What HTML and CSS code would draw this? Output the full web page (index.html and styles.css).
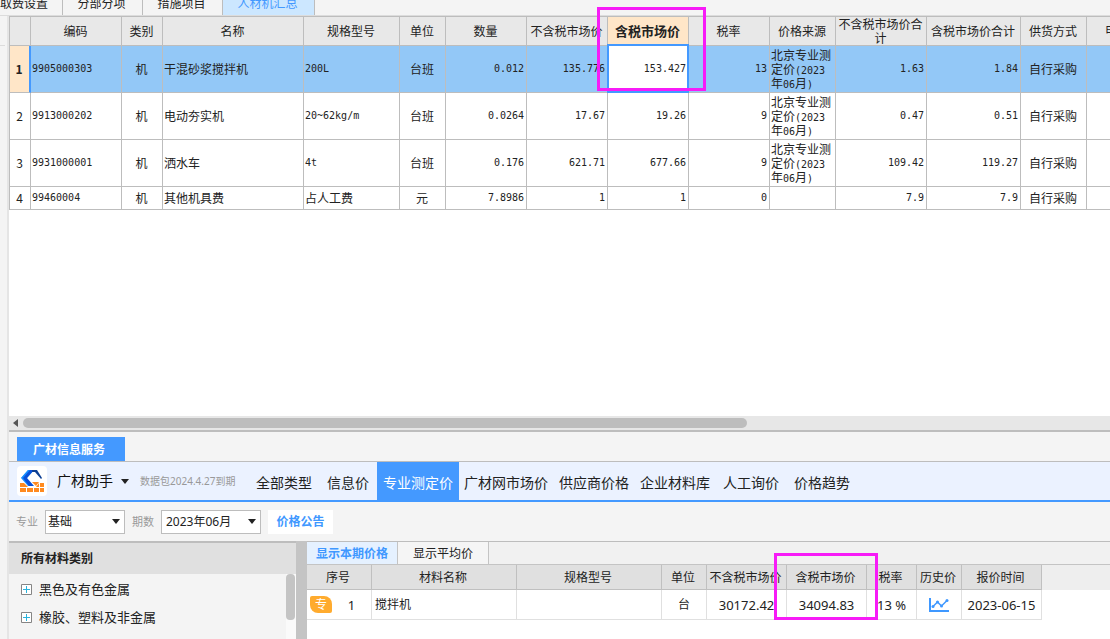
FILE: index.html
```html
<!DOCTYPE html>
<html lang="zh-CN">
<head>
<meta charset="utf-8">
<title>人材机汇总</title>
<link rel="stylesheet" href="styles.css">
</head>
<body>
<nav class="page-tabs">
  <button type="button" class="page-tab page-tab-first">取费设置</button>
  <button type="button" class="page-tab">分部分项</button>
  <button type="button" class="page-tab">措施项目</button>
  <button type="button" class="page-tab page-tab-active">人材机汇总</button>
</nav>
<div class="work">
  <div class="gutter"><div class="gutter-head"></div></div>
  <main class="main">
    <section class="sheet">
      <table class="grid">
        <colgroup>
          <col class="w-index"><col class="w-code"><col class="w-kind"><col class="w-name"><col class="w-spec"><col class="w-unit">
          <col class="w-num"><col class="w-num"><col class="w-num"><col class="w-num"><col class="w-source"><col class="w-code"><col class="w-total"><col class="w-source"><col class="w-last">
        </colgroup>
        <thead>
          <tr><th></th><th>编码</th><th>类别</th><th>名称</th><th>规格型号</th><th>单位</th><th>数量</th><th>不含税市场价</th><th class="current-col">含税市场价</th><th>税率</th><th>价格来源</th><th>不含税市场价合计</th><th>含税市场价合计</th><th>供货方式</th><th>甲供数量</th></tr>
        </thead>
        <tbody>
          <tr class="row-tall row-selected"><th class="current-row">1</th><td class="num left">9905000303</td><td class="mid">机</td><td>干混砂浆搅拌机</td><td class="num left">200L</td><td class="mid">台班</td><td class="num">0.012</td><td class="num">135.776</td><td class="num cell-edit">153.427</td><td class="num">13</td><td>北京专业测定价<span class="half">(2023</span>年<span class="half">06</span>月<span class="half">)</span></td><td class="num">1.63</td><td class="num">1.84</td><td class="mid">自行采购</td><td></td></tr>
          <tr class="row-tall"><th>2</th><td class="num left">9913000202</td><td class="mid">机</td><td>电动夯实机</td><td class="num left">20~62kg/m</td><td class="mid">台班</td><td class="num">0.0264</td><td class="num">17.67</td><td class="num">19.26</td><td class="num">9</td><td>北京专业测定价<span class="half">(2023</span>年<span class="half">06</span>月<span class="half">)</span></td><td class="num">0.47</td><td class="num">0.51</td><td class="mid">自行采购</td><td></td></tr>
          <tr class="row-tall"><th>3</th><td class="num left">9931000001</td><td class="mid">机</td><td>洒水车</td><td class="num left">4t</td><td class="mid">台班</td><td class="num">0.176</td><td class="num">621.71</td><td class="num">677.66</td><td class="num">9</td><td>北京专业测定价<span class="half">(2023</span>年<span class="half">06</span>月<span class="half">)</span></td><td class="num">109.42</td><td class="num">119.27</td><td class="mid">自行采购</td><td></td></tr>
          <tr><th>4</th><td class="num left">99460004</td><td class="mid">机</td><td>其他机具费</td><td>占人工费</td><td class="mid">元</td><td class="num">7.8986</td><td class="num">1</td><td class="num">1</td><td class="num">0</td><td></td><td class="num">7.9</td><td class="num">7.9</td><td class="mid">自行采购</td><td></td></tr>
        </tbody>
      </table>
      <div class="mark mark-sheet"></div>
    </section>
    <div class="hscroll"><span class="hscroll-arrow"></span><span class="hscroll-thumb"></span></div>

    <section class="service">
      <div class="service-tabs"><button type="button" class="service-tab">广材信息服务</button></div>
      <div class="toolbar">
        <svg class="logo" viewBox="0 0 30 30" aria-hidden="true">
          <rect width="30" height="30" rx="4" fill="#fff"/>
          <path fill="#ff8a1f" d="M3 17h4l4 4h8l3-4h5v9H3z"/>
          <path fill="#35b5ff" d="M11 4h6L10 12H4z"/>
          <path fill="#178cff" d="M11 4h3L8 12l6 8h-3L4 12z"/>
          <path fill="#0a50d8" d="M17 4l-7 8 7 8h-5L6 12l7-8z"/>
          <path fill="#0c3f94" d="M15 4h5l5 8-1 1-6-7h-3z"/>
          <path fill="#ff8a1f" d="M15 16h7l-3 4z"/>
          <path stroke="#fff" d="M3 21.500h24M9.500 22v4M16.500 22v4M22.500 17v9" fill="none"/>
        </svg>
        <button type="button" class="brand">广材助手<span class="caret"></span></button>
        <span class="expiry">数据包2024.4.27到期</span>
        <nav class="kinds">
          <button type="button" class="kind kind-wide">全部类型</button><button type="button" class="kind kind-wide">信息价</button><button type="button" class="kind kind-active">专业测定价</button><button type="button" class="kind">广材网市场价</button><button type="button" class="kind">供应商价格</button><button type="button" class="kind">企业材料库</button><button type="button" class="kind kind-wide">人工询价</button><button type="button" class="kind kind-wide">价格趋势</button>
        </nav>
      </div>
      <div class="filters">
        <label for="major">专业</label>
        <span class="picker picker-major"><select id="major"><option>基础</option></select><span class="caret"></span></span>
        <label for="period">期数</label>
        <span class="picker picker-period"><select id="period"><option>2023年06月</option></select><span class="caret"></span></span>
        <button type="button" class="notice">价格公告</button>
      </div>
      <div class="lower">
        <aside class="tree">
          <h2>所有材料类别</h2>
          <div class="tree-body">
            <ul>
              <li><button type="button" class="node"><svg class="plus" viewBox="0 0 11 11" aria-hidden="true"><path d="M.5.5h10v10H.5z" fill="#fff" stroke="#858585"/><path d="M2 5.500h7M5.500 2v7" stroke="#2ab3dc"/></svg>黑色及有色金属</button></li>
              <li><button type="button" class="node"><svg class="plus" viewBox="0 0 11 11" aria-hidden="true"><path d="M.5.5h10v10H.5z" fill="#fff" stroke="#858585"/><path d="M2 5.500h7M5.500 2v7" stroke="#2ab3dc"/></svg>橡胶、塑料及非金属</button></li>
            </ul>
            <div class="vscroll"><div class="vscroll-thumb"></div></div>
          </div>
        </aside>
        <div class="splitter"></div>
        <div class="prices">
          <div class="price-tabs"><button type="button" class="price-tab price-tab-active">显示本期价格</button><button type="button" class="price-tab">显示平均价</button></div>
          <div class="price-wrap">
            <table class="price-grid">
              <colgroup><col class="p-index"><col class="p-wide"><col class="p-wide"><col class="p-small"><col class="p-price"><col class="p-price"><col class="p-rate"><col class="p-small"><col class="p-price"></colgroup>
              <thead><tr><th>序号</th><th>材料名称</th><th>规格型号</th><th>单位</th><th>不含税市场价</th><th>含税市场价</th><th>税率</th><th>历史价</th><th>报价时间</th></tr></thead>
              <tbody><tr>
                <td><div class="serial"><span class="badge">专</span><span class="serial-no">1</span></div></td><td class="material">搅拌机</td><td></td><td class="unit">台</td><td>30172.42</td><td>34094.83</td><td>13 %</td>
                <td><button type="button" class="history" aria-label="历史价"><svg viewBox="0 0 20 14" aria-hidden="true"><path d="M1 0v13h19" fill="none" stroke="#3f98ff" stroke-width="2"/><path d="M4 8.500L8.500 4l4 4L18 2.500" fill="none" stroke="#3f98ff" stroke-width="1.500"/><g fill="#3f98ff"><circle cx="4" cy="8.500" r="1.500"/><circle cx="8.500" cy="4" r="1.500"/><circle cx="12.500" cy="8" r="1.500"/><circle cx="18" cy="2.500" r="1.500"/></g></svg></button></td><td>2023-06-15</td>
              </tr></tbody>
            </table>
          </div>
          <div class="mark mark-price"></div>
        </div>
      </div>
    </section>
  </main>
</div>
</body>
</html>
```

FILE: styles.css
```css
* { box-sizing: border-box; }

body {
  margin: 0;
  min-height: 100vh;
  display: flex;
  flex-direction: column;
  overflow: hidden;
  background: #f4f4f4;
  color: #222;
  font: 12px/14px "Noto Sans", "Noto Sans CJK SC", sans-serif;
}

button, select {
  border: 0;
  padding: 0;
  background: none;
  color: inherit;
  font: inherit;
  white-space: nowrap;
}

table { border-collapse: separate; border-spacing: 0; table-layout: fixed; }

.caret {
  width: 0;
  height: 0;
  border: 4px solid transparent;
  border-top: 5px solid #222;
  border-bottom: 0;
}

.mark { position: absolute; border: 3px solid #f71bf7; pointer-events: none; }

/* Page tabs */
.page-tabs { display: flex; height: 16px; border-bottom: 1px solid #dcdcdc; }
.page-tab {
  width: 80px;
  height: 15px;
  padding: 0 2px 8px 0;
  border-right: 1px solid #bdbdbd;
  line-height: 7px;
}
.page-tab-first { width: 63px; padding-right: 16px; text-align: right; }
.page-tab-active { width: 92px; background: #cce7ff; color: #4499ff; }

.work { flex: 1; display: flex; }
.gutter { flex: none; width: 9px; border-right: 2px solid #e5e5e5; }
.gutter-head { width: 5px; height: 30px; border-bottom: 1px solid #dcdcdc; }
.main { flex: 1; min-width: 0; display: flex; flex-direction: column; }

/* Resource sheet */
.sheet { position: relative; flex: 1; overflow-x: clip; background: #fff; }
.grid {
  width: 1164px;
  border-top: 1px solid #bdbdbd;
  border-left: 1px solid #bdbdbd;
  font-family: "Noto Sans CJK SC", sans-serif;
}
.w-index { width: 21px; }
.w-code { width: 91px; }
.w-kind { width: 41px; }
.w-name { width: 141px; }
.w-spec { width: 96px; }
.w-unit { width: 46px; }
.w-num { width: 81px; }
.w-source { width: 66px; }
.w-total { width: 94px; }
.w-last { width: 86px; }
.grid th, .grid td {
  height: 23px;
  padding: 0 1px;
  border-right: 1px solid #bdbdbd;
  border-bottom: 1px solid #bdbdbd;
  font-weight: 400;
  text-align: left;
}
.grid th { padding: 0 1px 0 0; text-align: center; }
.grid thead th { height: 29px; background: #e8e8e8; }
.grid .row-tall > * { height: 47px; }
.grid .num { padding-right: 2px; font: 10px/14px "DejaVu Sans Mono", monospace; text-align: right; }
.grid .left { text-align: left; }
.grid .mid { padding-right: 2px; text-align: center; }
.half { font: 10px/8px "DejaVu Sans Mono", monospace; }
.grid .current-col { background: #ffe6c8; font-weight: 700; font-size: 13px; }
.grid .row-selected td { background: #93c8f7; }
.grid .row-selected .current-row {
  border-right: 2px solid #4499ff;
  background: #ffe6c8;
  font-weight: 700;
}
.grid .row-selected .cell-edit { position: relative; background: #fff; }
.cell-edit::after {
  content: "";
  position: absolute;
  inset: -2px -1px -1px;
  border: 2px solid #4499ff;
}
.mark-sheet { left: 588px; top: -9px; width: 109px; height: 84px; }

.hscroll {
  display: flex;
  align-items: center;
  gap: 5px;
  height: 16px;
  padding-left: 4px;
  border-bottom: 2px solid #bdbdbd;
  background: #e7e7e7;
}
.hscroll-arrow { border: 4px solid transparent; border-right: 5px solid #555; border-left: 0; }
.hscroll-thumb { width: 66%; height: 10px; border-radius: 5px; background: #bdbdbd; }

/* Service panel */
.service-tabs { display: flex; height: 30px; padding: 5px 8px 0; border-bottom: 1px solid #bdbdbd; }
.service-tab { width: 108px; height: 24px; padding: 2px 4px 0 0; background: #4499ff; color: #fff; font-weight: 700; }

.toolbar {
  display: flex;
  align-items: center;
  height: 40px;
  padding-left: 8px;
  border-bottom: 2px solid #4499ff;
  background: #ebf2ff;
}
.logo { flex: none; width: 30px; height: 30px; }
.brand { display: flex; align-items: center; gap: 8px; margin: 0 11px 0 10px; font-size: 14px; color: #111; }
.expiry { width: 109px; color: #999; font-size: 10px; white-space: nowrap; }
.kinds { display: flex; align-self: stretch; }
.kind { padding: 4px 6px 0 5px; font-size: 14px; }
.kind-wide { padding: 4px 8px 0 7px; }
.kind-active { padding: 4px 6px 0; background: #4499ff; color: #fff; }

.filters { display: flex; align-items: center; gap: 7px; height: 39px; padding: 0 7px; }
.filters label { color: #999; font-size: 11px; }
.picker { position: relative; height: 24px; }
.picker select {
  appearance: none;
  width: 100%;
  height: 24px;
  padding: 0 4px;
  border: 1px solid #bdbdbd;
  border-radius: 0;
  background: #fff;
}
.picker-major { width: 80px; }
.picker-major select { padding: 0 2px; }
.picker-period { width: 100px; }
.picker .caret { position: absolute; right: 5px; top: 9px; pointer-events: none; }
.notice { width: 65px; height: 24px; background: #fff; color: #3f98ff; font-weight: 700; }

.lower { display: flex; min-height: 98px; }
.tree { flex: none; width: 287px; display: flex; flex-direction: column; border-top: 2px solid #bdbdbd; }
.tree h2 { margin: 0; padding: 0 12px; background: #e0e0e0; font-size: 12px; line-height: 31px; }
.tree-body { flex: 1; display: flex; justify-content: space-between; }
.tree ul { margin: 0; padding: 1px 12px 0; list-style: none; }
.node { display: flex; align-items: center; gap: 7px; height: 28px; font-size: 13px; }
.plus { width: 11px; height: 11px; }
.vscroll { width: 10px; background: #fafafa; }
.vscroll-thumb { width: 9px; height: 46px; border-radius: 4px; background: #c4c4c4; }
.splitter { flex: none; width: 11px; background: #c4c4c4; }

.prices { position: relative; flex: 1; min-width: 0; border-top: 1px solid #bdbdbd; background: #fff; }
.price-tabs { display: flex; height: 23px; border-bottom: 1px solid #c4c4c4; background: #f1f1f1; }
.price-tab { width: 91px; padding-top: 2px; border-right: 1px solid #c4c4c4; background: #f5f5f5; }
.price-tab-active { background: #e5f1ff; color: #3f98ff; font-weight: 700; }
.price-wrap { background: linear-gradient(#eee, #eee) top / 100% 25px no-repeat; }
.price-grid { width: 735px; }
.p-index { width: 65px; }
.p-wide { width: 145px; }
.p-small { width: 45px; }
.p-price { width: 80px; }
.p-rate { width: 50px; }
.price-grid th {
  height: 25px;
  padding: 2px 2px 0 0;
  border-right: 1px solid #c0c0c0;
  border-bottom: 1px solid #c0c0c0;
  background: #e0e0e0;
  font-weight: 400;
  white-space: nowrap;
}
.price-grid td {
  height: 30px;
  padding: 0;
  border-right: 1px solid #e0e0e0;
  border-bottom: 1px solid #e0e0e0;
  font-size: 13px;
  text-align: center;
}
.price-grid .material { padding-left: 3px; font-size: 12px; text-align: left; }
.price-grid .unit { font-size: 12px; }
.serial { display: flex; align-items: center; padding-left: 3px; }
.badge {
  width: 22px;
  height: 17px;
  border-radius: 2px 8px 2px 8px;
  background: #ffab2e;
  color: #fff;
  font-size: 12px;
  line-height: 17px;
}
.serial-no { flex: 1; }
.history { display: block; margin: 0 auto; }
.history svg { display: block; width: 20px; height: 14px; }
.mark-price { left: 467px; top: 11px; width: 104px; height: 67px; }
```
